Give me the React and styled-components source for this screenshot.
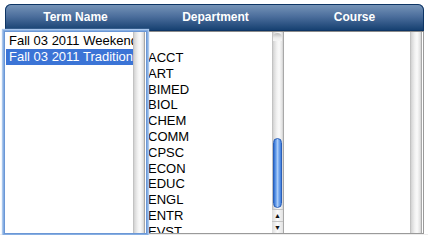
import React from "react";
import styled, { createGlobalStyle } from "styled-components";

const GlobalStyle = createGlobalStyle`
  html, body {
    margin: 0;
    padding: 0;
    background: #ffffff;
  }
  body {
    font-family: "Liberation Sans", Arial, sans-serif;
  }
`;

const terms = ["Fall 03 2011 Weekend", "Fall 03 2011 Traditional"];
const departments = [
  "",
  "ACCT",
  "ART",
  "BIMED",
  "BIOL",
  "CHEM",
  "COMM",
  "CPSC",
  "ECON",
  "EDUC",
  "ENGL",
  "ENTR",
  "EVST",
  "FINA",
];

function App() {
  return (
    <>
      <GlobalStyle />
      <Page>
        <Panel>
          <Header>
            <HeadCell>Term Name</HeadCell>
            <HeadCell>Department</HeadCell>
            <HeadCell>Course</HeadCell>
          </Header>
          <Body>
            <ListBox focused>
              <Items>
                {terms.map((t, i) => (
                  <TermOption key={t} selected={i === 1}>
                    {t}
                  </TermOption>
                ))}
              </Items>
              <Track />
            </ListBox>
            <ListBox>
              <Items>
                {departments.map((d, i) => (
                  <DeptOption key={i}>{d}</DeptOption>
                ))}
              </Items>
              <Track>
                <TopCap />
                <TrackSpace>
                  <Thumb />
                </TrackSpace>
                <ArrowBtn>▲</ArrowBtn>
                <ArrowBtn>▼</ArrowBtn>
              </Track>
            </ListBox>
            <ListBox last>
              <Items />
              <Track />
            </ListBox>
          </Body>
        </Panel>
        <Footer />
      </Page>
    </>
  );
}

const Page = styled.div`
  width: 428px;
  height: 235px;
  overflow: hidden;
  display: flex;
  flex-direction: column;
`;

const Panel = styled.div`
  margin: 4px 4px 0 5px;
  width: 419px;
  display: flex;
  flex-direction: column;
`;

const Header = styled.div`
  height: 27px;
  display: grid;
  grid-template-columns: 141px 139px 139px;
  border-radius: 6px 6px 0 0;
  background: linear-gradient(to bottom, #7896b9 0%, #4d6f9d 45%, #123d6e 100%);
  box-shadow: inset 0 0 0 1px #0e3564;
  border-bottom: 1px solid #8a8a8a;
`;

const HeadCell = styled.div`
  display: flex;
  align-items: center;
  justify-content: center;
  color: #ffffff;
  font-weight: bold;
  font-size: 12px;
  padding-bottom: 1px;
`;

const Body = styled.div`
  height: 201px;
  display: grid;
  grid-template-columns: 141px 139px 139px;
  border-bottom: 1px solid #9a9a9a;
`;

const ListBox = styled.div`
  position: relative;
  display: flex;
  background: #ffffff;
  border-right: ${(p) => (p.last ? "1px solid #9a9a9a" : "none")};
  z-index: ${(p) => (p.focused ? 2 : 1)};
  overflow: ${(p) => (p.focused ? "visible" : "hidden")};
  box-shadow: ${(p) =>
    p.focused
      ? "0 0 0 1px #6b97d6, 0 0 0 2px #86aee2, 0 0 1px 3px #a9c6ec"
      : "none"};
`;

const Items = styled.div`
  flex: 1;
  min-width: 0;
  overflow: hidden;
  padding-top: 1px;
  background: #ffffff;
`;

const TermOption = styled.div`
  height: 16px;
  line-height: 16px;
  padding-left: 3px;
  margin-left: 1px;
  font-size: 13px;
  white-space: nowrap;
  overflow: hidden;
  color: ${(p) => (p.selected ? "#ffffff" : "#000000")};
  background: ${(p) => (p.selected ? "#3b74d6" : "transparent")};
`;

const DeptOption = styled.div`
  height: 15.8px;
  line-height: 15.8px;
  padding-left: 2px;
  font-size: 13px;
  white-space: nowrap;
  color: #000000;
  &:first-child {
    height: 17px;
  }
`;

const Track = styled.div`
  width: 11px;
  flex: none;
  display: flex;
  flex-direction: column;
  margin-right: 1px;
  background: linear-gradient(
    to right,
    #b9b9b9 0%,
    #d9d9d9 15%,
    #f2f2f2 45%,
    #fafafa 65%,
    #e4e4e4 90%,
    #cfcfcf 100%
  );
  border-right: 1px solid #a8a8a8;
`;

const TopCap = styled.div`
  height: 8px;
  margin: 1px 1px 0;
  border-radius: 5px 5px 0 0;
  background: linear-gradient(to bottom, #bdbdbd, #ececec 60%, #f5f5f5);
`;

const TrackSpace = styled.div`
  flex: 1;
  display: flex;
  flex-direction: column;
  justify-content: flex-end;
  padding-bottom: 1px;
`;

const Thumb = styled.div`
  height: 68px;
  margin: 0 1px;
  border-radius: 5px;
  border: 1px solid #2a5fb8;
  background: linear-gradient(
    to right,
    #2f6fd0 0%,
    #6fa4ee 30%,
    #a9cbf7 50%,
    #6ea2ec 75%,
    #3f7ddb 100%
  );
`;

const ArrowBtn = styled.div`
  height: 11px;
  display: flex;
  align-items: center;
  justify-content: center;
  font-size: 7px;
  color: #111111;
  border-top: 1px solid #c4c4c4;
  background: linear-gradient(to right, #dcdcdc, #fbfbfb 50%, #e2e2e2);
`;

const Footer = styled.div`
  flex: 1;
  background: #ededed;
`;

export default App;
